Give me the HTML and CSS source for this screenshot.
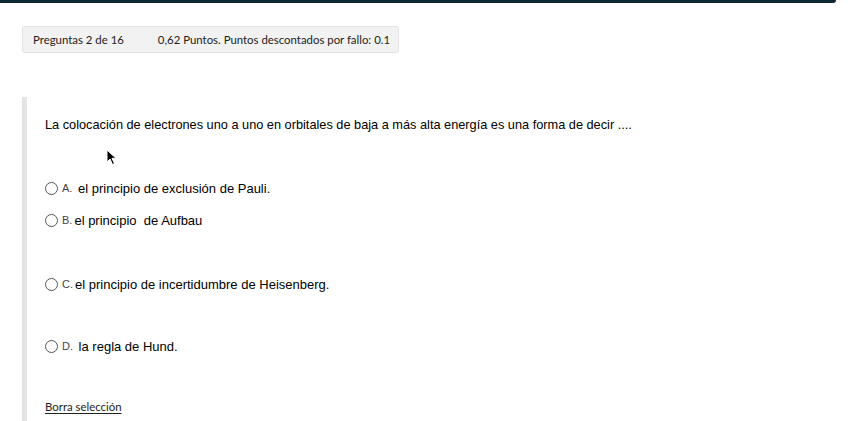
FILE: index.html
```html
<!DOCTYPE html>
<html lang="es">
<head>
  <meta charset="UTF-8" />
  <title>Pregunta 2</title>
  <link rel="stylesheet" href="styles.css">
</head>
<body>
  <div class="topbar"></div>

  <div class="info">
    <span class="count">Preguntas 2 de 16</span>
    <span class="points">0,62 Puntos. Puntos descontados por fallo: 0.1</span>
  </div>

  <div class="question">
    <p class="stem">La colocación de electrones uno a uno en orbitales de baja a más alta energía es una forma de decir ....</p>
    <div class="spacer"></div>

    <label class="option"><span class="radio"></span><span class="letter">A.</span>&nbsp;el principio de exclusión de Pauli.</label>
    <label class="option"><span class="radio"></span><span class="letter">B.</span>el principio&nbsp; de Aufbau</label>
    <div class="gap"></div>
    <label class="option"><span class="radio"></span><span class="letter">C.</span>el principio de incertidumbre de Heisenberg.</label>
    <div class="gap small"></div>
    <label class="option"><span class="radio"></span><span class="letter">D.</span>&nbsp;la regla de Hund.</label>

    <a class="clear" href="#">Borra selección</a>
  </div>

  <svg class="cursor" width="12" height="18" viewBox="0 0 12 18">
    <path d="M1 1 L1 13 L4 10 L6.5 15.5 L8.5 14.6 L6 9.3 L10 9.3 Z" fill="#000" stroke="#fff" stroke-width="1"/>
  </svg>
</body>
</html>
```

FILE: styles.css
```css
* {
  box-sizing: border-box;
}
body {
  margin: 0;
  background: #fff;
  font-family: "Liberation Sans", Arial, sans-serif;
  color: #111;
  position: relative;
}
.topbar {
  width: 836px;
  height: 3px;
  background: #0e2833;
  border-bottom-right-radius: 4px;
}
.info {
  display: flex;
  align-items: center;
  gap: 34px;
  width: 377px;
  height: 27px;
  margin: 23px 0 0 22px;
  padding: 0 10px;
  background: #f2f2f2;
  border: 1px solid #e3e3e3;
  border-radius: 3px;
  font-family: Lato, "Open Sans", sans-serif;
  font-size: 11.4px;
  color: #222;
  white-space: nowrap;
}
.info span {
  flex-shrink: 0;
}
.question {
  margin: 44px 0 0 22px;
  padding: 20px 0 0 18px;
  border-left: 5px solid #e3e4e6;
  min-height: 330px;
}
.stem {
  margin: 0;
  font-size: 12.75px;
  line-height: 16px;
  color: #000;
}
.spacer {
  height: 39px;
}
.option {
  display: flex;
  align-items: center;
  height: 32px;
  font-size: 13px;
  color: #000;
  white-space: pre;
}
.radio {
  width: 13px;
  height: 13px;
  border: 1px solid #555;
  border-radius: 50%;
  margin-right: 4px;
}
.letter {
  font-size: 11px;
  color: #444;
  margin-right: 2px;
}
.gap {
  height: 32px;
}
.gap.small {
  height: 30px;
}
.clear {
  display: inline-block;
  margin-top: 38px;
  font-family: Lato, "Open Sans", sans-serif;
  font-size: 11.4px;
  color: #222;
  text-decoration: underline;
  text-underline-offset: 2px;
}
.cursor {
  position: absolute;
  left: 106px;
  top: 149px;
}
```
